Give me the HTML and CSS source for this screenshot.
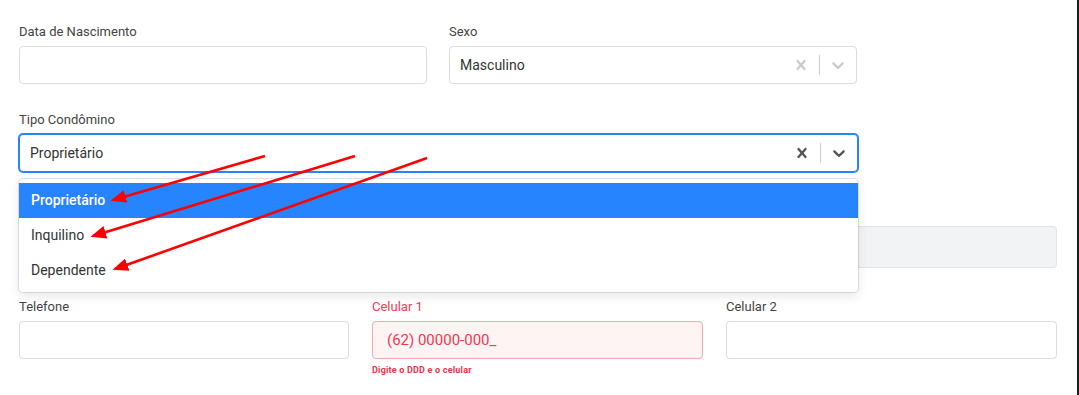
FILE: index.html
```html
<!DOCTYPE html>
<html lang="pt-br">
<head>
  <meta charset="UTF-8" />
  <meta name="viewport" content="width=device-width, initial-scale=1.0"/>
  <title>Cadastro de Condômino</title>
  <link rel="stylesheet" href="styles.css">
</head>
<body>

  <div class="page">
    <div class="row two">
      <div class="field">
        <label>Data de Nascimento</label>
        <div class="input"></div>
      </div>
      <div class="field">
        <label>Sexo</label>
        <div class="select">
          <div class="value">Masculino</div>
          <div class="indicator">
            <svg viewBox="0 0 20 20"><path d="M14.348 14.849c-0.469 0.469-1.229 0.469-1.697 0l-2.651-3.030-2.651 3.029c-0.469 0.469-1.229 0.469-1.697 0-0.469-0.469-0.469-1.229 0-1.697l2.758-3.150-2.759-3.152c-0.469-0.469-0.469-1.228 0-1.697s1.228-0.469 1.697 0l2.652 3.031 2.651-3.031c0.469-0.469 1.228-0.469 1.697 0s0.469 1.229 0 1.697l-2.758 3.152 2.758 3.15c0.469 0.469 0.469 1.229 0 1.698z"/></svg>
          </div>
          <span class="separator"></span>
          <div class="indicator">
            <svg viewBox="0 0 20 20"><path d="M4.516 7.548c0.436-0.446 1.043-0.481 1.576 0l3.908 3.747 3.908-3.747c0.533-0.481 1.141-0.446 1.574 0 0.436 0.445 0.408 1.197 0 1.615-0.406 0.418-4.695 4.502-4.695 4.502-0.217 0.223-0.502 0.335-0.787 0.335s-0.57-0.112-0.789-0.335c0 0-4.287-4.084-4.695-4.502s-0.436-1.17 0-1.615z"/></svg>
          </div>
        </div>
      </div>
    </div>

    <div class="row one">
      <div class="field">
        <label>Tipo Condômino</label>
        <div class="select focused">
          <div class="value">Proprietário</div>
          <div class="indicator">
            <svg viewBox="0 0 20 20"><path d="M14.348 14.849c-0.469 0.469-1.229 0.469-1.697 0l-2.651-3.030-2.651 3.029c-0.469 0.469-1.229 0.469-1.697 0-0.469-0.469-0.469-1.229 0-1.697l2.758-3.150-2.759-3.152c-0.469-0.469-0.469-1.228 0-1.697s1.228-0.469 1.697 0l2.652 3.031 2.651-3.031c0.469-0.469 1.228-0.469 1.697 0s0.469 1.229 0 1.697l-2.758 3.152 2.758 3.15c0.469 0.469 0.469 1.229 0 1.698z"/></svg>
          </div>
          <span class="separator"></span>
          <div class="indicator">
            <svg viewBox="0 0 20 20"><path d="M4.516 7.548c0.436-0.446 1.043-0.481 1.576 0l3.908 3.747 3.908-3.747c0.533-0.481 1.141-0.446 1.574 0 0.436 0.445 0.408 1.197 0 1.615-0.406 0.418-4.695 4.502-4.695 4.502-0.217 0.223-0.502 0.335-0.787 0.335s-0.57-0.112-0.789-0.335c0 0-4.287-4.084-4.695-4.502s-0.436-1.17 0-1.615z"/></svg>
          </div>

          <!-- menu aberto -->
          <div class="menu">
            <div class="option selected">Proprietário</div>
            <div class="option">Inquilino</div>
            <div class="option">Dependente</div>
          </div>
        </div>
      </div>
    </div>

    <div class="row three hidden-row">
      <div class="field">
        <label>Bloco</label>
        <div class="input tall"></div>
      </div>
      <div class="field">
        <label>Unidade</label>
        <div class="input tall"></div>
      </div>
      <div class="field">
        <label>&nbsp;</label>
        <div class="input tall disabled"></div>
      </div>
    </div>

    <div class="row three last">
      <div class="field">
        <label>Telefone</label>
        <div class="input"></div>
      </div>
      <div class="field error">
        <label>Celular 1</label>
        <div class="input">(62) 00000-000_</div>
        <small>Digite o DDD e o celular</small>
      </div>
      <div class="field">
        <label>Celular 2</label>
        <div class="input"></div>
      </div>
    </div>

    <!-- setas de destaque -->
    <svg class="arrows" width="1079" height="395" viewBox="0 0 1079 395">
      <defs>
        <marker id="head" markerWidth="6" markerHeight="5" refX="5" refY="2.5" orient="auto" markerUnits="strokeWidth">
          <path d="M0,0 L6,2.5 L0,5 z" fill="#f00"/>
        </marker>
      </defs>
      <line x1="265" y1="156" x2="113" y2="200" stroke="#f00" stroke-width="2.6" marker-end="url(#head)"/>
      <line x1="355" y1="156" x2="93" y2="236" stroke="#f00" stroke-width="2.6" marker-end="url(#head)"/>
      <line x1="427" y1="158" x2="115" y2="269" stroke="#f00" stroke-width="2.6" marker-end="url(#head)"/>
    </svg>
  </div>

</body>
</html>
```

FILE: styles.css
```css
html, body {
  margin: 0;
  height: 100%;
}

body {
  font-family: Roboto, "Noto Sans", sans-serif;
  background-color: white;
  color: #3c4043;
}

.page {
  position: relative;
  box-sizing: border-box;
  width: 1079px;
  min-height: 100vh;
  padding: 23px 0 0 19px;
  border-right: 2px solid #1f1f1f;
}

.row {
  display: grid;
  column-gap: 22px;
}

.row.two {
  grid-template-columns: 408px 408px;
  margin-bottom: 27px;
}

.row.one {
  grid-template-columns: 839px;
  margin-bottom: 31px;
}

.row.three {
  grid-template-columns: 330px 331px 331px;
  column-gap: 23px;
}

.hidden-row {
  margin-bottom: 30px;
}

.field label {
  display: block;
  font-size: 13px;
  line-height: 18px;
  margin-bottom: 5px;
  color: #444;
}

.input {
  box-sizing: border-box;
  height: 38px;
  border: 1px solid #dcdcdc;
  border-radius: 4px;
  padding: 0 14px;
  font-size: 15px;
  line-height: 36px;
  color: #333;
}

.input.tall {
  height: 42px;
}

.input.disabled {
  background-color: #f2f3f5;
  border-color: #e2e3e5;
}

.field.error label {
  color: #f23c55;
}

.field.error .input {
  background-color: #fff4f4;
  border-color: #f3a9b0;
  color: #ee3a52;
}

.field small {
  display: block;
  margin-top: 6px;
  font-size: 9px;
  font-weight: bold;
  letter-spacing: 0.2px;
  color: #e8344a;
}

.select {
  position: relative;
  box-sizing: border-box;
  height: 38px;
  display: flex;
  align-items: center;
  border: 1px solid #dcdcdc;
  border-radius: 4px;
  background: white;
}

.select.focused {
  border-color: #2684ff;
  box-shadow: 0 0 0 1px #2684ff;
}

.select .value {
  flex-grow: 1;
  padding: 0 10px;
  font-size: 14px;
  color: #333;
}

.indicator {
  display: flex;
  padding: 8px;
  color: #cccccc;
}

.select.focused .indicator {
  color: #555;
}

.indicator svg {
  width: 20px;
  height: 20px;
  fill: currentColor;
}

.separator {
  align-self: stretch;
  width: 1px;
  margin: 8px 0;
  background-color: #cccccc;
}

.menu {
  position: absolute;
  top: 100%;
  left: -1px;
  right: -1px;
  margin-top: 8px;
  padding: 4px 0;
  background: white;
  border-radius: 4px;
  box-shadow: 0 0 0 1px rgba(0,0,0,0.1), 0 4px 11px rgba(0,0,0,0.1);
  z-index: 10;
}

.option {
  padding: 8px 12px;
  font-size: 14px;
  line-height: 19px;
  color: #333;
}

.option.selected {
  background-color: #2684ff;
  color: white;
  font-weight: 500;
}

.arrows {
  position: absolute;
  top: 0;
  left: 0;
  z-index: 20;
  pointer-events: none;
}
```
